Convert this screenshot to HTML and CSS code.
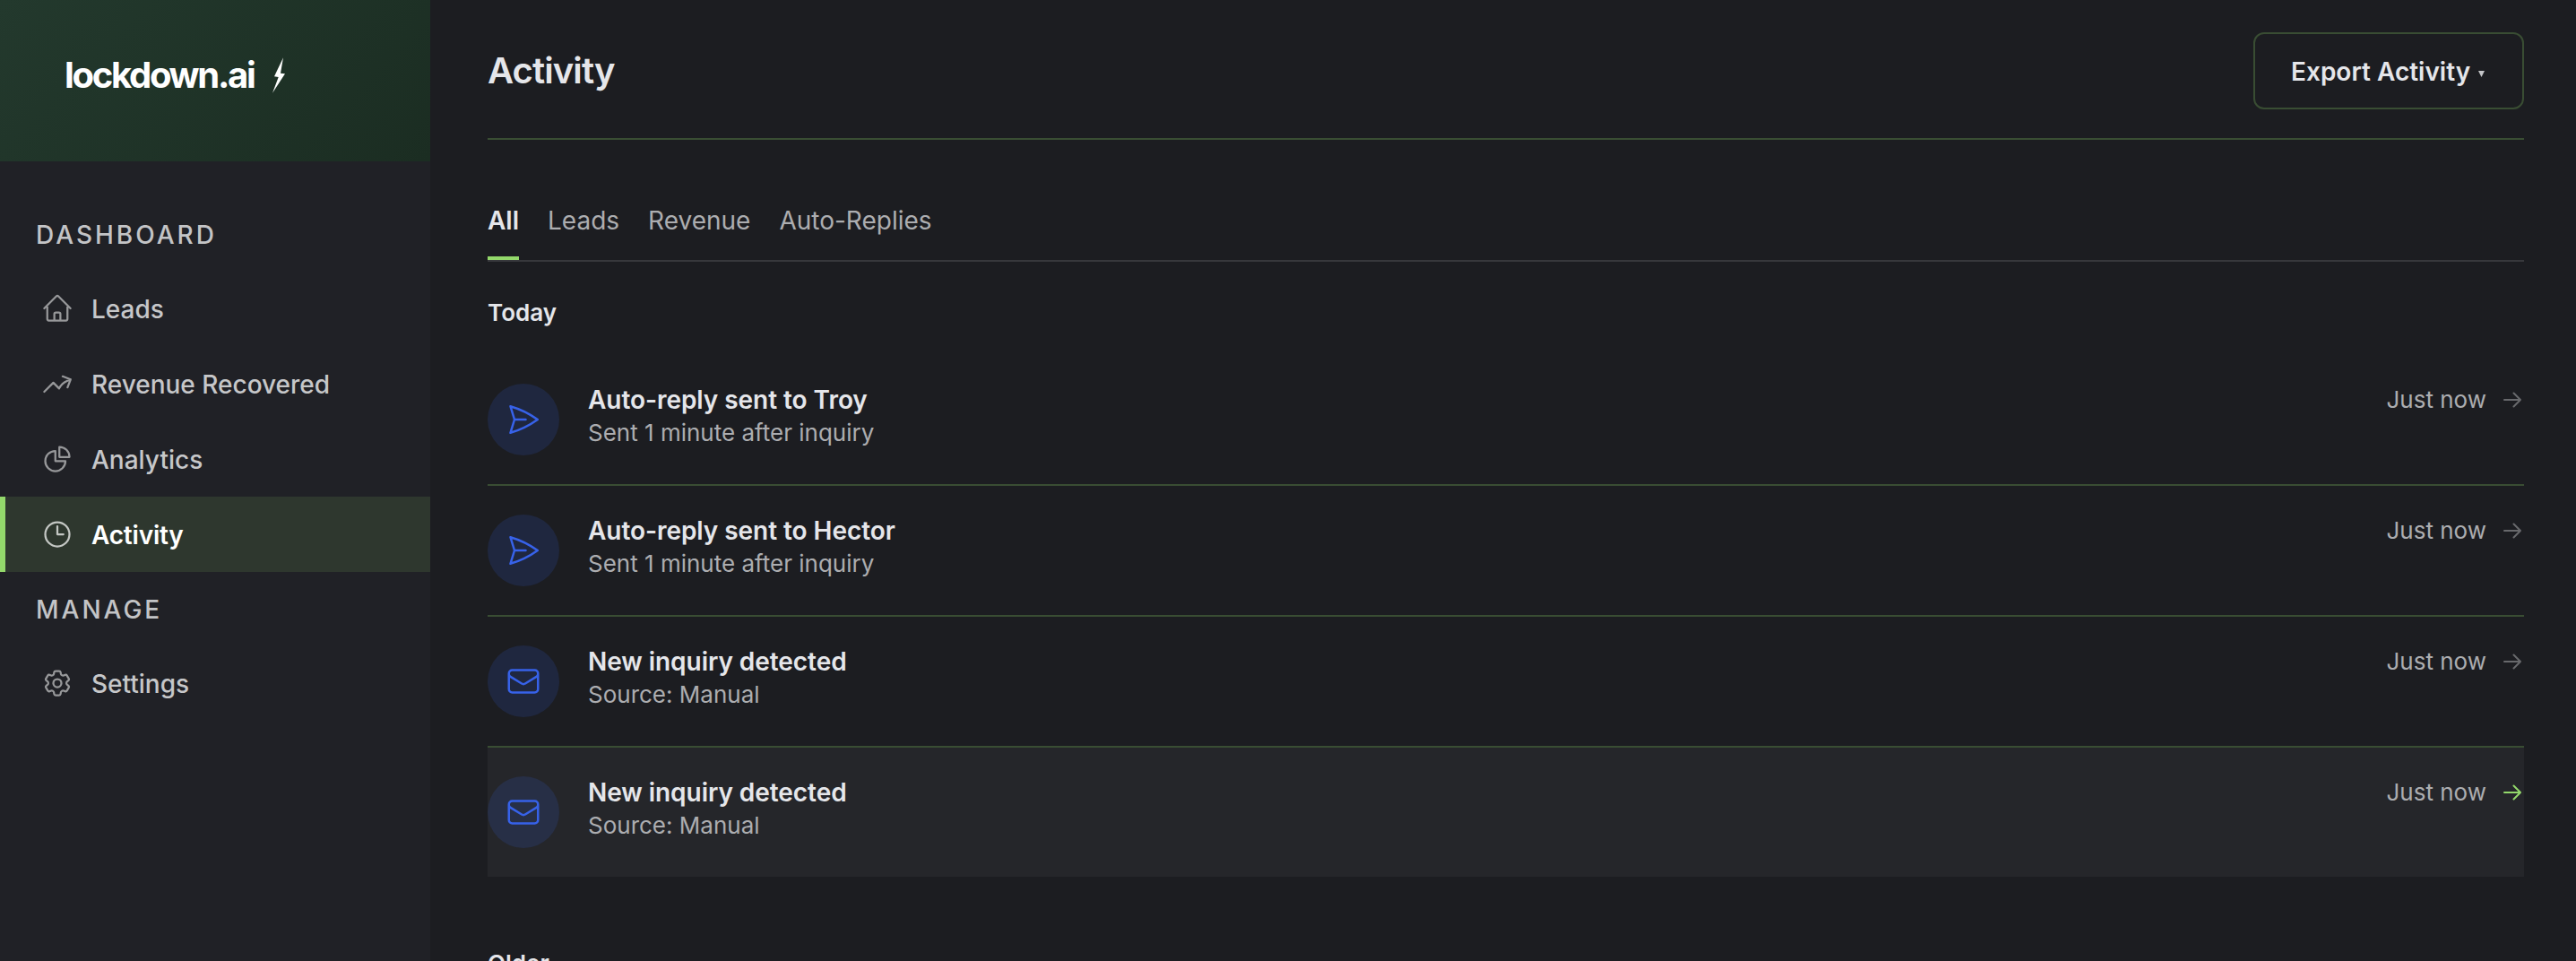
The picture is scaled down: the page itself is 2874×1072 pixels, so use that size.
FILE: index.html
```html
<!DOCTYPE html>
<html lang="en">
<head>
<meta charset="utf-8">
<title>Activity</title>
<link rel="stylesheet" href="styles.css">
</head>
<body>
<svg class="sprite" aria-hidden="true">
  <symbol id="send" viewBox="0 0 24 24"><path d="M6 12 3.269 3.125A59.769 59.769 0 0 1 21.485 12 59.768 59.768 0 0 1 3.27 20.875L5.999 12Zm0 0h7.5"/></symbol>
  <symbol id="mail" viewBox="0 0 24 24"><path d="M21.75 6.75v10.5a2.25 2.25 0 0 1-2.25 2.25h-15a2.25 2.25 0 0 1-2.25-2.25V6.75m19.5 0A2.25 2.25 0 0 0 19.5 4.5h-15a2.25 2.25 0 0 0-2.25 2.25m19.5 0v.243a2.25 2.25 0 0 1-1.07 1.916l-7.5 4.615a2.25 2.25 0 0 1-2.36 0L3.32 8.91a2.25 2.25 0 0 1-1.07-1.916V6.75"/></symbol>
  <symbol id="arrow" viewBox="0 0 24 24"><path d="M13.5 4.5 21 12m0 0-7.5 7.5M21 12H3"/></symbol>
</svg>
<div class="app">
  <aside class="sidebar">
    <div class="brand">
      <span class="brand-name">lockdown.ai</span>
      <svg class="bolt" viewBox="0 0 14 40"><path d="M12 .3 2 21.3l4.7.7L0 39.7l14-21.4-5-.6Z"/></svg>
    </div>
    <nav class="nav">
      <div class="nav-label">DASHBOARD</div>
      <a class="nav-item">
        <svg class="icon" viewBox="0 0 24 24"><path d="m2.25 12 8.954-8.955c.44-.439 1.152-.439 1.591 0L21.75 12M4.5 9.75v10.125c0 .621.504 1.125 1.125 1.125H9.75v-4.875c0-.621.504-1.125 1.125-1.125h2.25c.621 0 1.125.504 1.125 1.125V21h4.125c.621 0 1.125-.504 1.125-1.125V9.75M8.25 21h8.25"/></svg>
        <span>Leads</span>
      </a>
      <a class="nav-item">
        <svg class="icon" viewBox="0 0 24 24"><path d="M2.25 18 9 11.25l4.306 4.306a11.95 11.95 0 0 1 5.814-5.518l2.74-1.22m0 0-5.94-2.281m5.94 2.28-2.28 5.941"/></svg>
        <span>Revenue Recovered</span>
      </a>
      <a class="nav-item">
        <svg class="icon" viewBox="0 0 24 24"><path d="M10.5 6a7.5 7.5 0 1 0 7.5 7.5h-7.5V6Z"/><path d="M13.5 10.5H21A7.5 7.5 0 0 0 13.5 3v7.5Z"/></svg>
        <span>Analytics</span>
      </a>
      <a class="nav-item active">
        <svg class="icon" viewBox="0 0 24 24"><path d="M12 6v6h4.5m4.5 0a9 9 0 1 1-18 0 9 9 0 0 1 18 0Z"/></svg>
        <span>Activity</span>
      </a>
      <div class="nav-label">MANAGE</div>
      <a class="nav-item">
        <svg class="icon" viewBox="0 0 24 24"><path d="M9.594 3.94c.09-.542.56-.94 1.11-.94h2.593c.55 0 1.02.398 1.11.94l.213 1.281c.063.374.313.686.645.87.074.04.147.083.22.127.325.196.72.257 1.075.124l1.217-.456a1.125 1.125 0 0 1 1.37.49l1.296 2.247a1.125 1.125 0 0 1-.26 1.431l-1.003.827c-.293.241-.438.613-.43.992a7.723 7.723 0 0 1 0 .255c-.008.378.137.75.43.991l1.004.827c.424.35.534.955.26 1.43l-1.298 2.247a1.125 1.125 0 0 1-1.369.491l-1.217-.456c-.355-.133-.75-.072-1.076.124a6.47 6.47 0 0 1-.22.128c-.331.183-.581.495-.644.869l-.213 1.281c-.09.543-.56.94-1.11.94h-2.594c-.55 0-1.019-.398-1.11-.94l-.213-1.281c-.062-.374-.312-.686-.644-.87a6.52 6.52 0 0 1-.22-.127c-.325-.196-.72-.257-1.076-.124l-1.217.456a1.125 1.125 0 0 1-1.369-.49l-1.297-2.247a1.125 1.125 0 0 1 .26-1.431l1.004-.827c.292-.24.437-.613.43-.991a6.932 6.932 0 0 1 0-.255c.007-.38-.138-.751-.43-.992l-1.004-.827a1.125 1.125 0 0 1-.26-1.43l1.297-2.247a1.125 1.125 0 0 1 1.37-.491l1.216.456c.356.133.751.072 1.076-.124.072-.044.146-.086.22-.128.332-.183.582-.495.644-.869l.214-1.28Z"/><path d="M15 12a3 3 0 1 1-6 0 3 3 0 0 1 6 0Z"/></svg>
        <span>Settings</span>
      </a>
    </nav>
  </aside>
  <main class="main">
    <header class="header">
      <h1 class="title">Activity</h1>
      <button class="export"><span>Export Activity</span><svg class="caret" viewBox="0 0 6 6"><path d="M0 0h6L3 6Z"/></svg></button>
    </header>
    <div class="tabs">
      <a class="tab selected">All</a>
      <a class="tab">Leads</a>
      <a class="tab">Revenue</a>
      <a class="tab">Auto-Replies</a>
    </div>
    <section class="group">
      <h2 class="group-title">Today</h2>
      <div class="row">
        <div class="badge"><svg class="glyph"><use href="#send"/></svg></div>
        <div class="text"><div class="name">Auto-reply sent to Troy</div><div class="detail">Sent 1 minute after inquiry</div></div>
        <div class="meta"><span>Just now</span><svg class="go"><use href="#arrow"/></svg></div>
      </div>
      <div class="row">
        <div class="badge"><svg class="glyph"><use href="#send"/></svg></div>
        <div class="text"><div class="name">Auto-reply sent to Hector</div><div class="detail">Sent 1 minute after inquiry</div></div>
        <div class="meta"><span>Just now</span><svg class="go"><use href="#arrow"/></svg></div>
      </div>
      <div class="row">
        <div class="badge"><svg class="glyph"><use href="#mail"/></svg></div>
        <div class="text"><div class="name">New inquiry detected</div><div class="detail">Source: Manual</div></div>
        <div class="meta"><span>Just now</span><svg class="go"><use href="#arrow"/></svg></div>
      </div>
      <div class="row hovered">
        <div class="badge"><svg class="glyph"><use href="#mail"/></svg></div>
        <div class="text"><div class="name">New inquiry detected</div><div class="detail">Source: Manual</div></div>
        <div class="meta"><span>Just now</span><svg class="go"><use href="#arrow"/></svg></div>
      </div>
    </section>
    <section class="group">
      <h2 class="group-title">Older</h2>
    </section>
  </main>
</div>
</body>
</html>
```
FILE: styles.css
```css
* { box-sizing: border-box; }

body {
  margin: 0;
  background: #1c1d21;
  color: #e5e6ea;
  font-family: Inter, "Liberation Sans", sans-serif;
  font-size: 28px;
  -webkit-font-smoothing: antialiased;
}

h1, h2 { margin: 0; }

svg {
  display: block;
  flex: none;
  fill: none;
  stroke: currentColor;
  stroke-width: 1.5;
  stroke-linecap: round;
  stroke-linejoin: round;
}

.sprite { display: none; }

.app {
  display: flex;
  height: 1072px;
  overflow: hidden;
}

/* Sidebar */
.sidebar {
  flex: none;
  width: 480px;
  background: #202126;
}

.brand {
  display: flex;
  align-items: center;
  gap: 21px;
  height: 180px;
  padding: 0 72px 12px;
  background: linear-gradient(135deg, #23392d 0%, #1b2d22 100%);
  color: #fff;
}

.brand-name {
  font-size: 40px;
  font-weight: 700;
  letter-spacing: -2.3px;
  line-height: 48px;
}

.bolt {
  width: 14px;
  height: 40px;
  fill: #fff;
  stroke: none;
}

.nav { padding-top: 40px; }

.nav-label {
  height: 82px;
  padding-left: 40px;
  color: #c3c4c6;
  font-weight: 500;
  letter-spacing: 3px;
  line-height: 84px;
}

.nav-item {
  display: flex;
  align-items: center;
  gap: 20px;
  height: 84px;
  padding-left: 40px;
  border-left: 6px solid transparent;
  color: #c6c7c9;
  font-weight: 500;
}

.nav-item span { padding-top: 2px; }

.icon {
  width: 36px;
  height: 36px;
  color: #97989a;
}

.nav-item.active {
  border-left-color: #93d86b;
  background: #2e372e;
  color: #fff;
  font-weight: 600;
  letter-spacing: -0.2px;
}

.active .icon { color: #c4c7c4; }

/* Main column */
.main {
  flex: 1;
  padding: 36px 58px 0 64px;
}

.header {
  display: flex;
  align-items: center;
  justify-content: space-between;
  padding-bottom: 32px;
  border-bottom: 2px solid #394d33;
}

.title {
  font-size: 40px;
  font-weight: 600;
  letter-spacing: -0.9px;
  line-height: 48px;
}

.export {
  display: flex;
  align-items: center;
  justify-content: space-between;
  width: 302px;
  height: 86px;
  padding: 2px 42px 0 40px;
  border: 2px solid #394d33;
  border-radius: 12px;
  background: none;
  color: inherit;
  font: inherit;
  font-weight: 600;
}

.caret {
  width: 7px;
  height: 7px;
  margin-top: 4px;
  fill: #c4c5c8;
  stroke: none;
}

.tabs {
  display: flex;
  gap: 32px;
  margin-top: 73px;
  border-bottom: 2px solid #37383c;
}

.tab {
  padding-bottom: 23px;
  border-bottom: 4px solid transparent;
  color: #acadb0;
  line-height: 34px;
}

.tab.selected {
  border-color: #93d86b;
  color: #e5e6ea;
  font-weight: 600;
}

.group { padding-top: 40px; }
.group + .group { padding-top: 80px; }

.group-title {
  margin-bottom: 31px;
  font-size: 26px;
  font-weight: 600;
  line-height: 33px;
}

.row {
  display: flex;
  align-items: flex-start;
  gap: 32px;
  padding: 32px 0;
  border-bottom: 2px solid #394d33;
}

.row:last-child { border-bottom: 0; }
.row.hovered { background: #25262a; }

.badge {
  display: grid;
  place-items: center;
  width: 80px;
  height: 80px;
  border-radius: 50%;
  background: rgba(55, 98, 233, 0.15);
  color: #3762e9;
}

.glyph { width: 40px; height: 40px; }

.text { flex: 1; }

.name {
  font-weight: 600;
  letter-spacing: -0.05px;
  line-height: 36px;
}

.detail {
  color: #acadb0;
  font-size: 26px;
  line-height: 37px;
}

.meta {
  display: flex;
  align-items: center;
  gap: 17px;
  padding-right: 1px;
  color: #acadb0;
  font-size: 26px;
  line-height: 36px;
}

.go {
  width: 24px;
  height: 24px;
  color: #68696c;
  stroke-width: 2;
}

.hovered .go { color: #93d86b; }
```
